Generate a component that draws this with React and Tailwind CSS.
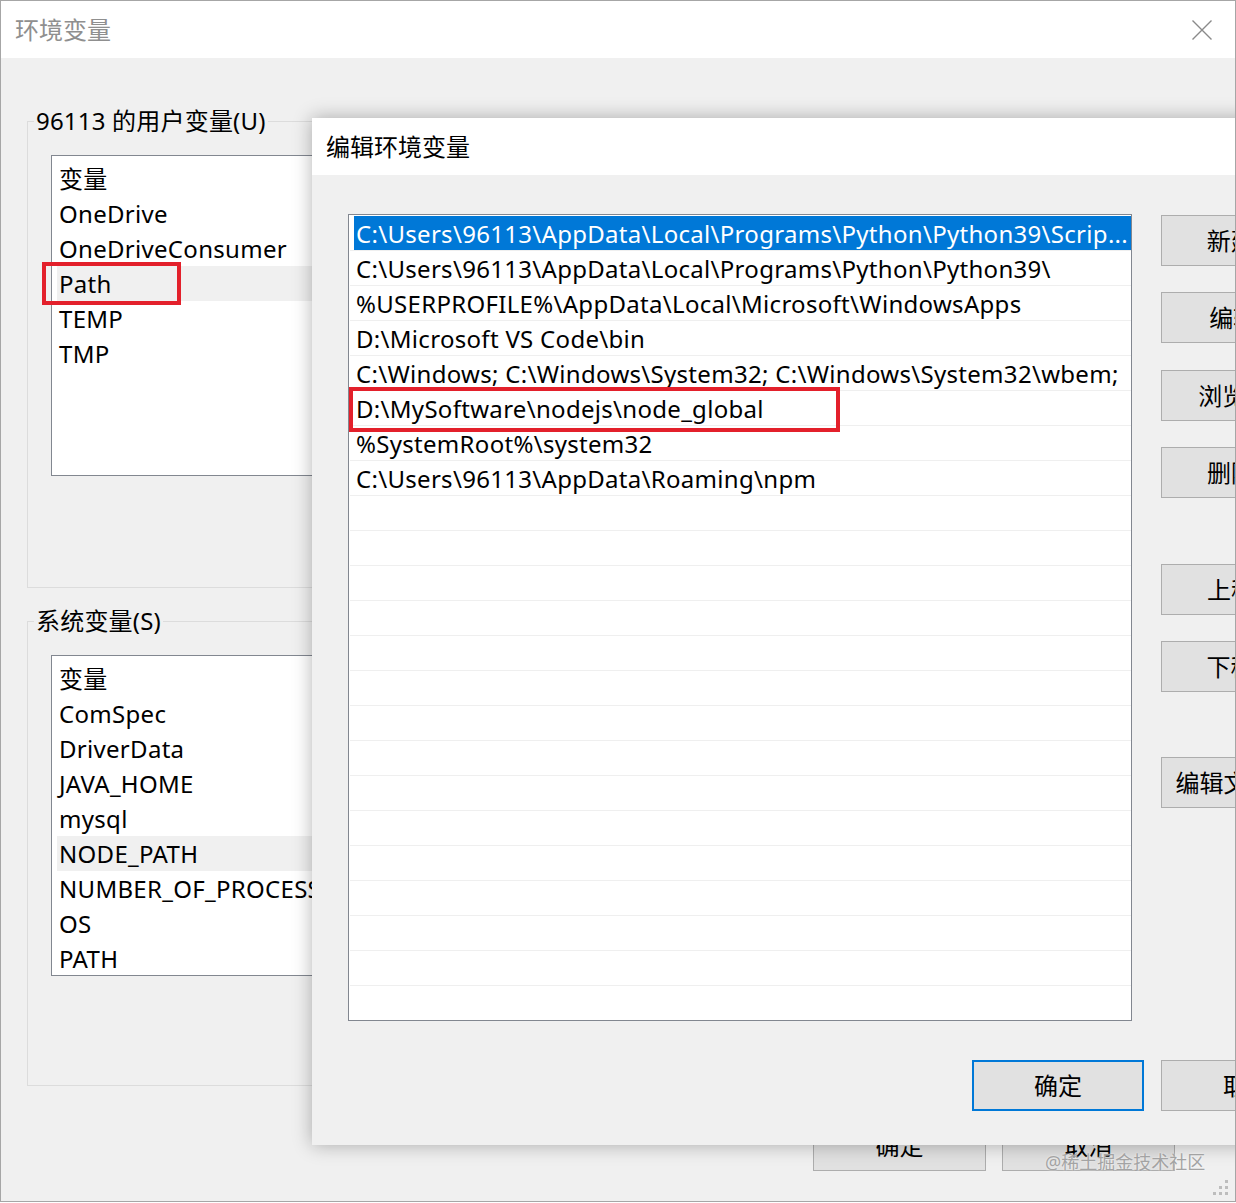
import React from "react";

const F = "font-['Noto_Sans','Noto_Sans_CJK_SC',sans-serif]";

function Btn({ children, className = "", focus = false }) {
  return (
    <div
      className={`w-[172px] h-[51px] shrink-0 bg-[#e1e1e1] flex items-center justify-center text-[24px] text-black whitespace-nowrap ${focus ? "border-2 border-[#0078d7]" : "border border-[#adadad]"} ${className}`}
    >
      {children}
    </div>
  );
}

function VarList({ items, hi, boxed, clip }) {
  return (
    <div
      className={`ml-[17px] w-[520px] h-[321px] bg-white border border-[#828790] pt-[5px] ${clip ? "overflow-hidden" : ""}`}
    >
      {items.map((t, i) => (
        <div
          key={i}
          className={`relative h-[35px] ml-[5px] pl-[2px] flex items-center text-[24px] tracking-[0.3px] text-black whitespace-nowrap ${i === hi ? "bg-[#f0f0f0]" : ""}`}
        >
          {t}
          {boxed === i && (
            <div className="absolute left-[-15px] top-[-4px] w-[139px] h-[43px] border-[4px] border-[#e3202b]" />
          )}
        </div>
      ))}
    </div>
  );
}

const paths = [
  "C:\\Users\\96113\\AppData\\Local\\Programs\\Python\\Python39\\Scrip...",
  "C:\\Users\\96113\\AppData\\Local\\Programs\\Python\\Python39\\",
  "%USERPROFILE%\\AppData\\Local\\Microsoft\\WindowsApps",
  "D:\\Microsoft VS Code\\bin",
  "C:\\Windows; C:\\Windows\\System32; C:\\Windows\\System32\\wbem;",
  "D:\\MySoftware\\nodejs\\node_global",
  "%SystemRoot%\\system32",
  "C:\\Users\\96113\\AppData\\Roaming\\npm",
];

export default function App() {
  const rows = Array.from({ length: 23 }, (_, i) => paths[i] || "");
  return (
    <div
      className={`relative w-[1236px] h-[1202px] overflow-hidden bg-[#f0f0f0] border border-[#a6a6a6] flex flex-col ${F}`}
    >
      {/* outer title bar */}
      <div className="h-[57px] shrink-0 bg-white flex items-center justify-between pl-[14px] pr-[23px]">
        <span className="text-[24px] text-[#8f8f8f]">环境变量</span>
        <svg width="20" height="20" viewBox="0 0 20 20">
          <path d="M0.5 0.5 L19.5 19.5 M19.5 0.5 L0.5 19.5" stroke="#8a8a8a" strokeWidth="1.4" fill="none" />
        </svg>
      </div>

      {/* outer body */}
      <div className="px-[26px] pt-[49px]">
        <fieldset className="border border-[#dcdcdc] pl-[6px] pt-[20px] pb-[111px]">
          <legend className="px-[2px] text-[24px] leading-[28px] tracking-[0.2px] text-black">96113 的用户变量(U)</legend>
          <VarList
            items={["变量", "OneDrive", "OneDriveConsumer", "Path", "TEMP", "TMP"]}
            hi={3}
            boxed={3}
          />
        </fieldset>
        <fieldset className="mt-[19px] border border-[#dcdcdc] pl-[6px] pt-[20px] pb-[109px]">
          <legend className="px-[2px] text-[24px] leading-[28px] tracking-[0.2px] text-black">系统变量(S)</legend>
          <VarList
            items={[
              "变量",
              "ComSpec",
              "DriverData",
              "JAVA_HOME",
              "mysql",
              "NODE_PATH",
              "NUMBER_OF_PROCESSORS",
              "OS",
              "PATH",
            ]}
            hi={5}
            clip
          />
        </fieldset>
      </div>

      <div className="flex justify-end gap-[16px] pr-[60px] mt-[34px]">
        <Btn className="w-[173px]">确定</Btn>
        <Btn className="w-[173px]">取消</Btn>
      </div>

      {/* edit dialog */}
      <div className="absolute left-[311px] top-[117px] w-[1057px] h-[1027px] bg-[#f0f0f0] shadow-[0_0_18px_rgba(0,0,0,0.3)] flex flex-col">
        <div className="h-[57px] shrink-0 bg-white flex items-center pl-[14px] text-[24px] text-black">
          编辑环境变量
        </div>
        <div className="pl-[36px] pr-[36px] pt-[39px] flex flex-col">
          <div className="flex">
            <div className="w-[784px] h-[807px] bg-white border border-[#828790] pt-[1px] pl-[1px] overflow-hidden">
              {rows.map((t, i) => (
                <div
                  key={i}
                  className="relative h-[35px] border-b border-[#efefef] flex text-[24px] tracking-[0.3px] whitespace-nowrap"
                >
                  {i === 0 ? (
                    <div className="ml-[4px] flex-1 bg-[#0078d7] text-white pl-[2px] pt-[1px] flex items-center overflow-hidden">
                      {t}
                    </div>
                  ) : (
                    <div className="pl-[6px] pt-[1px] flex items-center text-black overflow-hidden">{t}</div>
                  )}
                  {i === 5 && (
                    <div className="absolute left-[-1px] top-[-4px] w-[491px] h-[45px] border-[4px] border-[#e3202b]" />
                  )}
                </div>
              ))}
            </div>
            <div className="ml-[29px] mt-[1px] flex flex-col">
              <Btn>新建(N)</Btn>
              <Btn className="mt-[26px]">编辑(E)</Btn>
              <Btn className="mt-[27px]">浏览(B)...</Btn>
              <Btn className="mt-[26px]">删除(D)</Btn>
              <Btn className="mt-[66px]">上移(U)</Btn>
              <Btn className="mt-[26px]">下移(O)</Btn>
              <Btn className="mt-[65px]">编辑文本(T)...</Btn>
            </div>
          </div>
          <div className="mt-[39px] flex justify-end gap-[17px]">
            <Btn focus>确定</Btn>
            <Btn>取消</Btn>
          </div>
        </div>
      </div>

      {/* watermark */}
      <div className="absolute left-[1044px] top-[1149px] text-[18px] leading-[24px] text-[#a3a3a3] whitespace-nowrap [text-shadow:0_0_2px_rgba(255,255,255,0.8)]">
        @稀土掘金技术社区
      </div>

      {/* resize grip */}
      <svg className="absolute right-[5px] bottom-[4px]" width="18" height="18" viewBox="0 0 18 18">
        <rect x="13" y="1" width="3" height="3" fill="#bdbdbd" />
        <rect x="7" y="7" width="3" height="3" fill="#bdbdbd" />
        <rect x="13" y="7" width="3" height="3" fill="#bdbdbd" />
        <rect x="1" y="13" width="3" height="3" fill="#bdbdbd" />
        <rect x="7" y="13" width="3" height="3" fill="#bdbdbd" />
        <rect x="13" y="13" width="3" height="3" fill="#bdbdbd" />
      </svg>
    </div>
  );
}
